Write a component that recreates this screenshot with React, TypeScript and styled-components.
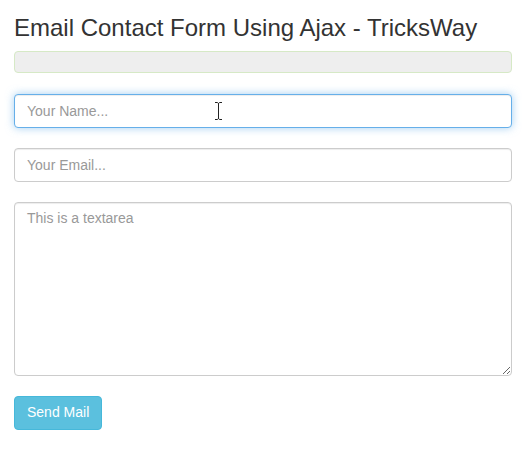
import React from "react";
import styled, { createGlobalStyle } from "styled-components";

const Global = createGlobalStyle`
  * { box-sizing: border-box; }
  html, body { margin: 0; padding: 0; background: #fff; }
  body {
    font-family: "Liberation Sans", Arial, Helvetica, sans-serif;
    font-size: 14px;
    line-height: 1.42857;
    color: #333;
  }
`;

const Page = styled.div`
  position: relative;
  padding: 15px 14px 0 14px;
  width: 526px;
`;

const Title = styled.h3`
  margin: 0 0 10px 0;
  font-size: 24px;
  font-weight: 400;
  line-height: 26.4px;
  color: #333;
`;

const Alert = styled.div`
  height: 22px;
  margin-bottom: 21px;
  background: #eeeeee;
  border: 1px solid #d6e9c6;
  border-radius: 4px;
`;

const Form = styled.form`
  display: flex;
  flex-direction: column;
  gap: 20px;
  align-items: flex-start;
`;

const fieldBase = `
  display: block;
  width: 100%;
  padding: 6px 12px;
  font-family: "Liberation Sans", Arial, Helvetica, sans-serif;
  font-size: 14px;
  line-height: 1.42857;
  color: #555;
  background: #fff;
  border: 1px solid #ccc;
  border-radius: 4px;
  box-shadow: inset 0 1px 1px rgba(0,0,0,0.075);
  outline: none;
  &::placeholder { color: #999; opacity: 1; }
`;

const Input = styled.input<{ $focused?: boolean }>`
  ${fieldBase}
  height: 34px;
  ${(p) =>
    p.$focused &&
    `border-color: #66afe9;
     box-shadow: inset 0 1px 1px rgba(0,0,0,.075), 0 0 8px rgba(102,175,233,.6);`}
`;

const TextArea = styled.textarea`
  ${fieldBase}
  height: 174px;
  resize: vertical;
`;

const Button = styled.button`
  height: 34px;
  padding: 6px 12px;
  font-family: "Liberation Sans", Arial, Helvetica, sans-serif;
  font-size: 14px;
  line-height: 1.42857;
  color: #fff;
  background: #5bc0de;
  border: 1px solid #46b8da;
  border-radius: 4px;
  cursor: pointer;
`;

const Cursor = styled.svg`
  position: absolute;
  left: 214px;
  top: 102px;
  pointer-events: none;
`;

export default function App() {
  return (
    <>
      <Global />
      <Page>
        <Title>Email Contact Form Using Ajax - TricksWay</Title>
        <Alert />
        <Form onSubmit={(e) => e.preventDefault()}>
          <Input type="text" placeholder="Your Name..." $focused />
          <Input type="email" placeholder="Your Email..." />
          <TextArea placeholder="This is a textarea" />
          <Button type="submit">Send Mail</Button>
        </Form>
        <Cursor width="9" height="18" viewBox="0 0 9 18">
          <path
            d="M1 0.5 H3.5 M5.5 0.5 H8 M3.5 0.5 Q4.5 1 4.5 2 V16 Q4.5 17 3.5 17.5 M5.5 0.5 Q4.5 1 4.5 2 M4.5 16 Q4.5 17 5.5 17.5 M1 17.5 H3.5 M5.5 17.5 H8"
            fill="none"
            stroke="#222"
            strokeWidth="1"
          />
        </Cursor>
      </Page>
    </>
  );
}
